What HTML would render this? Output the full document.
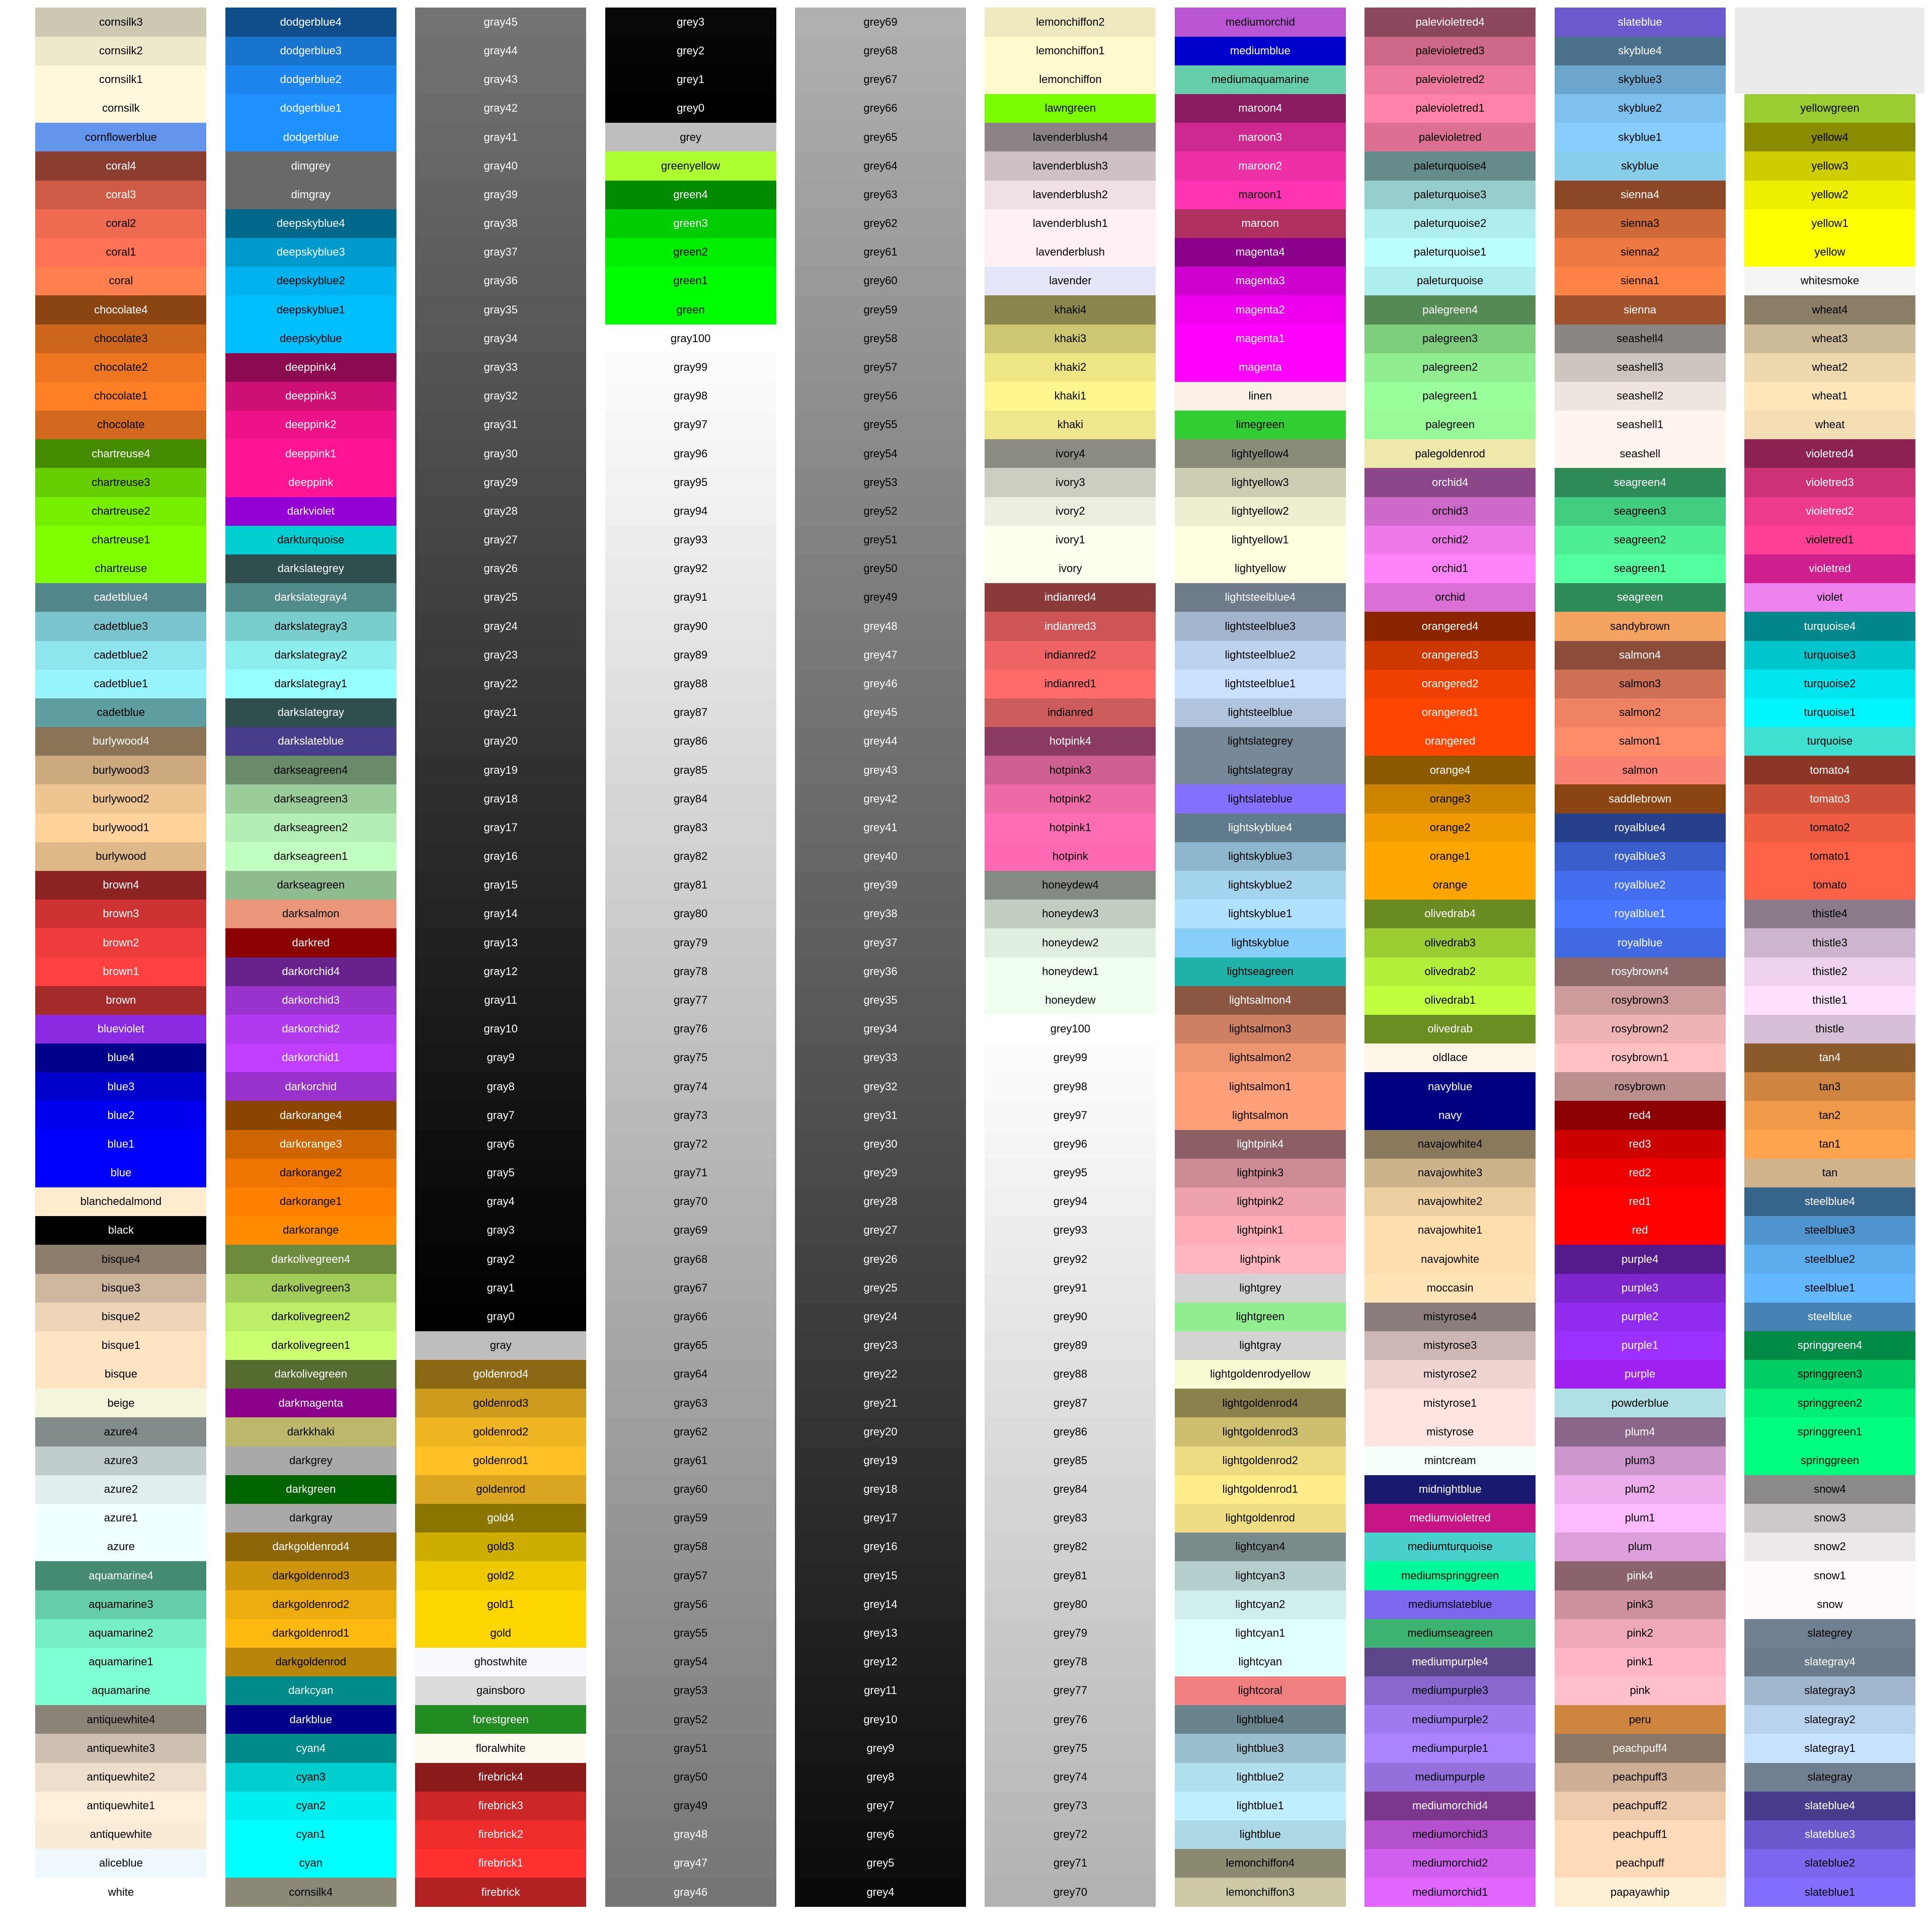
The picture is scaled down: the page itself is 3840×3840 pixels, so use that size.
<!DOCTYPE html>
<html><head><meta charset="utf-8">
<style>
html,body{margin:0;padding:0;background:#fff;width:3840px;height:3840px;overflow:hidden}
#c{position:relative;width:3840px;height:3840px}
.k{position:absolute;display:flex;align-items:center;justify-content:center;font-family:"Liberation Sans",sans-serif;font-size:22px;white-space:nowrap}
</style></head><body><div id="c"><div style="position:absolute;left:3448px;top:15px;width:377px;height:171px;background:#EBEBEB"></div></div>
<script>
var S="white FFFFFF|aliceblue F0F8FF|antiquewhite FAEBD7 FFEFDB EEDFCC CDC0B0 8B8378|aquamarine 7FFFD4 7FFFD4 76EEC6 66CDAA 458B74|azure F0FFFF F0FFFF E0EEEE C1CDCD 838B8B|beige F5F5DC|bisque FFE4C4 FFE4C4 EED5B7 CDB79E 8B7D6B|black 000000|blanchedalmond FFEBCD|blue 0000FF 0000FF 0000EE 0000CD 00008B|blueviolet 8A2BE2|brown A52A2A FF4040 EE3B3B CD3333 8B2323|burlywood DEB887 FFD39B EEC591 CDAA7D 8B7355|cadetblue 5F9EA0 98F5FF 8EE5EE 7AC5CD 53868B|chartreuse 7FFF00 7FFF00 76EE00 66CD00 458B00|chocolate D2691E FF7F24 EE7621 CD661D 8B4513|coral FF7F50 FF7256 EE6A50 CD5B45 8B3E2F|cornflowerblue 6495ED|cornsilk FFF8DC FFF8DC EEE8CD CDC8B1 8B8878|cyan 00FFFF 00FFFF 00EEEE 00CDCD 008B8B|darkblue 00008B|darkcyan 008B8B|darkgoldenrod B8860B FFB90F EEAD0E CD950C 8B6508|darkgray A9A9A9|darkgreen 006400|darkgrey A9A9A9|darkkhaki BDB76B|darkmagenta 8B008B|darkolivegreen 556B2F CAFF70 BCEE68 A2CD5A 6E8B3D|darkorange FF8C00 FF7F00 EE7600 CD6600 8B4500|darkorchid 9932CC BF3EFF B23AEE 9A32CD 68228B|darkred 8B0000|darksalmon E9967A|darkseagreen 8FBC8F C1FFC1 B4EEB4 9BCD9B 698B69|darkslateblue 483D8B|darkslategray 2F4F4F 97FFFF 8DEEEE 79CDCD 528B8B|darkslategrey 2F4F4F|darkturquoise 00CED1|darkviolet 9400D3|deeppink FF1493 FF1493 EE1289 CD1076 8B0A50|deepskyblue 00BFFF 00BFFF 00B2EE 009ACD 00688B|dimgray 696969|dimgrey 696969|dodgerblue 1E90FF 1E90FF 1C86EE 1874CD 104E8B|firebrick B22222 FF3030 EE2C2C CD2626 8B1A1A|floralwhite FFFAF0|forestgreen 228B22|gainsboro DCDCDC|ghostwhite F8F8FF|gold FFD700 FFD700 EEC900 CDAD00 8B7500|goldenrod DAA520 FFC125 EEB422 CD9B1D 8B6914|GRAY gray|green 00FF00 00FF00 00EE00 00CD00 008B00|greenyellow ADFF2F|GRAY grey|honeydew F0FFF0 F0FFF0 E0EEE0 C1CDC1 838B83|hotpink FF69B4 FF6EB4 EE6AA7 CD6090 8B3A62|indianred CD5C5C FF6A6A EE6363 CD5555 8B3A3A|ivory FFFFF0 FFFFF0 EEEEE0 CDCDC1 8B8B83|khaki F0E68C FFF68F EEE685 CDC673 8B864E|lavender E6E6FA|lavenderblush FFF0F5 FFF0F5 EEE0E5 CDC1C5 8B8386|lawngreen 7CFC00|lemonchiffon FFFACD FFFACD EEE9BF CDC9A5 8B8970|lightblue ADD8E6 BFEFFF B2DFEE 9AC0CD 68838B|lightcoral F08080|lightcyan E0FFFF E0FFFF D1EEEE B4CDCD 7A8B8B|lightgoldenrod EEDD82 FFEC8B EEDC82 CDBE70 8B814C|lightgoldenrodyellow FAFAD2|lightgray D3D3D3|lightgreen 90EE90|lightgrey D3D3D3|lightpink FFB6C1 FFAEB9 EEA2AD CD8C95 8B5F65|lightsalmon FFA07A FFA07A EE9572 CD8162 8B5742|lightseagreen 20B2AA|lightskyblue 87CEFA B0E2FF A4D3EE 8DB6CD 607B8B|lightslateblue 8470FF|lightslategray 778899|lightslategrey 778899|lightsteelblue B0C4DE CAE1FF BCD2EE A2B5CD 6E7B8B|lightyellow FFFFE0 FFFFE0 EEEED1 CDCDB4 8B8B7A|limegreen 32CD32|linen FAF0E6|magenta FF00FF FF00FF EE00EE CD00CD 8B008B|maroon B03060 FF34B3 EE30A7 CD2990 8B1C62|mediumaquamarine 66CDAA|mediumblue 0000CD|mediumorchid BA55D3 E066FF D15FEE B452CD 7A378B|mediumpurple 9370DB AB82FF 9F79EE 8968CD 5D478B|mediumseagreen 3CB371|mediumslateblue 7B68EE|mediumspringgreen 00FA9A|mediumturquoise 48D1CC|mediumvioletred C71585|midnightblue 191970|mintcream F5FFFA|mistyrose FFE4E1 FFE4E1 EED5D2 CDB7B5 8B7D7B|moccasin FFE4B5|navajowhite FFDEAD FFDEAD EECFA1 CDB38B 8B795E|navy 000080|navyblue 000080|oldlace FDF5E6|olivedrab 6B8E23 C0FF3E B3EE3A 9ACD32 698B22|orange FFA500 FFA500 EE9A00 CD8500 8B5A00|orangered FF4500 FF4500 EE4000 CD3700 8B2500|orchid DA70D6 FF83FA EE7AE9 CD69C9 8B4789|palegoldenrod EEE8AA|palegreen 98FB98 9AFF9A 90EE90 7CCD7C 548B54|paleturquoise AFEEEE BBFFFF AEEEEE 96CDCD 668B8B|palevioletred DB7093 FF82AB EE799F CD6889 8B475D|papayawhip FFEFD5|peachpuff FFDAB9 FFDAB9 EECBAD CDAF95 8B7765|peru CD853F|pink FFC0CB FFB5C5 EEA9B8 CD919E 8B636C|plum DDA0DD FFBBFF EEAEEE CD96CD 8B668B|powderblue B0E0E6|purple A020F0 9B30FF 912CEE 7D26CD 551A8B|red FF0000 FF0000 EE0000 CD0000 8B0000|rosybrown BC8F8F FFC1C1 EEB4B4 CD9B9B 8B6969|royalblue 4169E1 4876FF 436EEE 3A5FCD 27408B|saddlebrown 8B4513|salmon FA8072 FF8C69 EE8262 CD7054 8B4C39|sandybrown F4A460|seagreen 2E8B57 54FF9F 4EEE94 43CD80 2E8B57|seashell FFF5EE FFF5EE EEE5DE CDC5BF 8B8682|sienna A0522D FF8247 EE7942 CD6839 8B4726|skyblue 87CEEB 87CEFF 7EC0EE 6CA6CD 4A708B|slateblue 6A5ACD 836FFF 7A67EE 6959CD 473C8B|slategray 708090 C6E2FF B9D3EE 9FB6CD 6C7B8B|slategrey 708090|snow FFFAFA FFFAFA EEE9E9 CDC9C9 8B8989|springgreen 00FF7F 00FF7F 00EE76 00CD66 008B45|steelblue 4682B4 63B8FF 5CACEE 4F94CD 36648B|tan D2B48C FFA54F EE9A49 CD853F 8B5A2B|thistle D8BFD8 FFE1FF EED2EE CDB5CD 8B7B8B|tomato FF6347 FF6347 EE5C42 CD4F39 8B3626|turquoise 40E0D0 00F5FF 00E5EE 00C5CD 00868B|violet EE82EE|violetred D02090 FF3E96 EE3A8C CD3278 8B2252|wheat F5DEB3 FFE7BA EED8AE CDBA96 8B7E66|whitesmoke F5F5F5|yellow FFFF00 FFFF00 EEEE00 CDCD00 8B8B00|yellowgreen 9ACD32";
var L=[];
S.split("|").forEach(function(e){var p=e.split(" ");
 if(p[0]=="GRAY"){var n=p[1];L.push([n,"BEBEBE"]);for(var i=0;i<=100;i++){var v=Math.round(i*2.55-0.0001);var h=(v<16?"0":"")+v.toString(16);L.push([n+i,h+h+h]);}return;}
 L.push([p[0],p[1]]);for(var j=2;j<p.length;j++)L.push([p[0]+(j-1),p[j]]);});
var c=document.getElementById("c"),R=66,top0=15,rh=3774/66,x0=70.4,pitch=377.4,w=340,html="";
for(var k=0;k<L.length;k++){var col=Math.floor(k/R),row=R-1-(k%R);
 var hx=L[k][1],r=parseInt(hx.substr(0,2),16),g=parseInt(hx.substr(2,2),16),b=parseInt(hx.substr(4,2),16);
 var lum=0.299*r+0.587*g+0.114*b;var fg=lum<123?"#fff":"#000";
 var y=top0+row*rh,y2=top0+(row+1)*rh;
 html+='<div class="k" style="left:'+(x0+col*pitch).toFixed(1)+'px;top:'+y.toFixed(1)+'px;width:'+w+'px;height:'+(y2-y+0.6).toFixed(1)+'px;background:#'+hx+';color:'+fg+'">'+L[k][0]+'</div>';}
c.insertAdjacentHTML("beforeend",html);
</script></body></html>
